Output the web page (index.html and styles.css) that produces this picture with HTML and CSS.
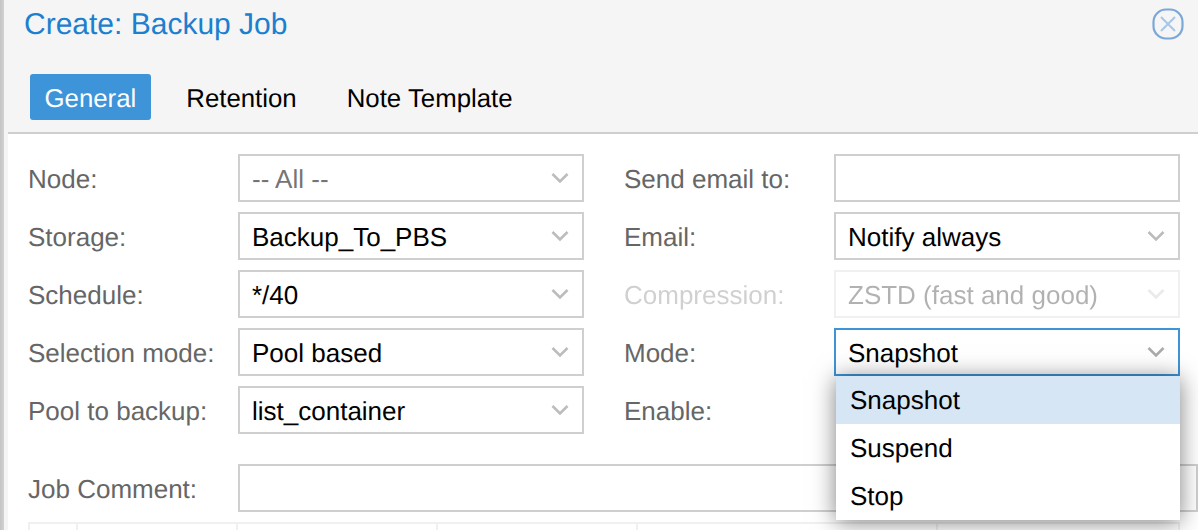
FILE: index.html
```html
<!DOCTYPE html>
<html lang="en">
<head>
<meta charset="utf-8">
<title>Create: Backup Job</title>
<link rel="stylesheet" href="styles.css">
</head>
<body>
<div class="window">
  <header class="titlebar">
    <h1 class="title">Create: Backup Job</h1>
    <svg class="close" viewBox="0 0 32 32" width="32" height="32" aria-hidden="true">
      <rect x="1.5" y="1.5" width="29" height="29" rx="12.5" fill="none" stroke="#7ba8d8" stroke-width="2.2"/>
      <path d="M9 9 23 23M23 9 9 23" fill="none" stroke="#a6c6ec" stroke-width="2"/>
    </svg>
  </header>
  <nav class="tabs">
    <span class="tab tab-active">General</span>
    <span class="tab">Retention</span>
    <span class="tab">Note Template</span>
  </nav>
  <main class="panel">
    <div class="columns">
      <div class="column">
        <div class="row"><span class="label">Node:</span><div class="field"><span class="value placeholder">-- All --</span><svg class="chev" viewBox="0 0 18 12"><path d="M1.5 2 9 9.5 16.5 2"/></svg></div></div>
        <div class="row"><span class="label">Storage:</span><div class="field"><span class="value">Backup_To_PBS</span><svg class="chev" viewBox="0 0 18 12"><path d="M1.5 2 9 9.5 16.5 2"/></svg></div></div>
        <div class="row"><span class="label">Schedule:</span><div class="field"><span class="value">*/40</span><svg class="chev" viewBox="0 0 18 12"><path d="M1.5 2 9 9.5 16.5 2"/></svg></div></div>
        <div class="row"><span class="label">Selection mode:</span><div class="field"><span class="value">Pool based</span><svg class="chev" viewBox="0 0 18 12"><path d="M1.5 2 9 9.5 16.5 2"/></svg></div></div>
        <div class="row"><span class="label">Pool to backup:</span><div class="field"><span class="value">list_container</span><svg class="chev" viewBox="0 0 18 12"><path d="M1.5 2 9 9.5 16.5 2"/></svg></div></div>
      </div>
      <div class="column">
        <div class="row"><span class="label">Send email to:</span><div class="field"></div></div>
        <div class="row"><span class="label">Email:</span><div class="field"><span class="value">Notify always</span><svg class="chev" viewBox="0 0 18 12"><path d="M1.5 2 9 9.5 16.5 2"/></svg></div></div>
        <div class="row row-disabled"><span class="label">Compression:</span><div class="field"><span class="value">ZSTD (fast and good)</span><svg class="chev" viewBox="0 0 18 12"><path d="M1.5 2 9 9.5 16.5 2"/></svg></div></div>
        <div class="row"><span class="label">Mode:</span>
          <div class="field field-focus"><span class="value">Snapshot</span><svg class="chev" viewBox="0 0 18 12"><path d="M1.5 2 9 9.5 16.5 2"/></svg>
            <ul class="menu">
              <li class="menu-item menu-item-active">Snapshot</li>
              <li class="menu-item">Suspend</li>
              <li class="menu-item">Stop</li>
            </ul>
          </div>
        </div>
        <div class="row"><span class="label">Enable:</span></div>
      </div>
    </div>
    <div class="row row-comment"><span class="label">Job Comment:</span><div class="field field-wide"></div></div>
    <div class="grid-head">
      <span class="cell c1"></span><span class="cell c2"></span><span class="cell c3"></span><span class="cell c4"></span><span class="cell c5"></span><span class="cell c6"></span>
    </div>
  </main>
</div>
</body>
</html>
```
FILE: styles.css
```css
* { box-sizing: border-box; }
html, body { margin: 0; height: 100%; overflow: hidden; }
body { font-family: "Liberation Sans", Arial, sans-serif; background: #f5f5f5; text-rendering: geometricPrecision; }
.window { height: 530px; background: #f5f5f5; display: flex; flex-direction: column; padding-left: 3px; position: relative; }
.window::before { content: ""; position: absolute; left: 0; top: 0; bottom: 0; width: 4px; background: linear-gradient(to right, #c4c4c4, #d2d2d2); }
.titlebar { height: 74px; display: flex; justify-content: space-between; align-items: flex-start; padding: 7px 14px 0 21px; }
.title { margin: 0; font-weight: 400; font-size: 30px; line-height: 36px; color: #1b80cf; }
.close { margin-top: 1px; filter: blur(.6px); }
.tabs { height: 60px; margin-left: 5px; padding-left: 22px; display: flex; align-items: flex-start; gap: 21px; border-bottom: 2px solid #cfcfcf; }
.tab { height: 46px; line-height: 50px; padding: 0 14.5px; font-size: 25.8px; color: #000; border-radius: 3px; }
.tab-active { background: #3d94d8; color: #fff; }
.panel { flex: 1; margin-left: 5px; background: #fff; padding: 20px 0 0 20px; overflow: hidden; }
.columns { display: flex; gap: 40px; }
.column { width: 556px; display: flex; flex-direction: column; gap: 10px; }
.row { height: 48px; display: flex; align-items: center; }
.label { width: 210px; flex: none; font-size: 26px; padding-top: 2px; color: #666; }
.field { position: relative; flex: 1; height: 48px; border: 2px solid #cfcfcf; background: #fff; display: flex; align-items: center; justify-content: space-between; padding: 0 13px 0 12px; }
.value { font-size: 26px; line-height: 46px; padding-top: 1px; color: #000; }
.placeholder { color: #757575; }
.chev { width: 18px; height: 12px; flex: none; fill: none; stroke: #bcbcbc; stroke-width: 2.6; margin-top: -1px; filter: blur(.5px); }
.row-disabled { opacity: .3; }
.field-focus { border-color: #3d94d8; }
.field-focus .chev { stroke: #ababab; }
.menu { position: absolute; z-index: 2; top: 46px; left: 0; width: 344px; margin: 0; padding: 0; list-style: none; background: #fff; box-shadow: 0 2px 22px rgba(0,0,0,.5); }
.menu-item { height: 48px; line-height: 48px; padding-left: 14px; font-size: 26px; color: #000; }
.menu-item-active { background: #d6e6f5; }
.row-comment { margin-top: 30px; }
.field-wide { flex: 1; }
.grid-head { display: flex; height: 40px; margin-top: 10px; border: 2px solid #f0f0f0; border-bottom: 0; width: 1152px; }
.cell { height: 100%; border-right: 2px solid #f0f0f0; flex: none; }
.c1 { width: 48px; } .c2 { width: 160px; } .c3 { width: 200px; } .c4 { width: 200px; } .c5 { width: 300px; } .c6 { flex: 1; border-right: 0; }
```
